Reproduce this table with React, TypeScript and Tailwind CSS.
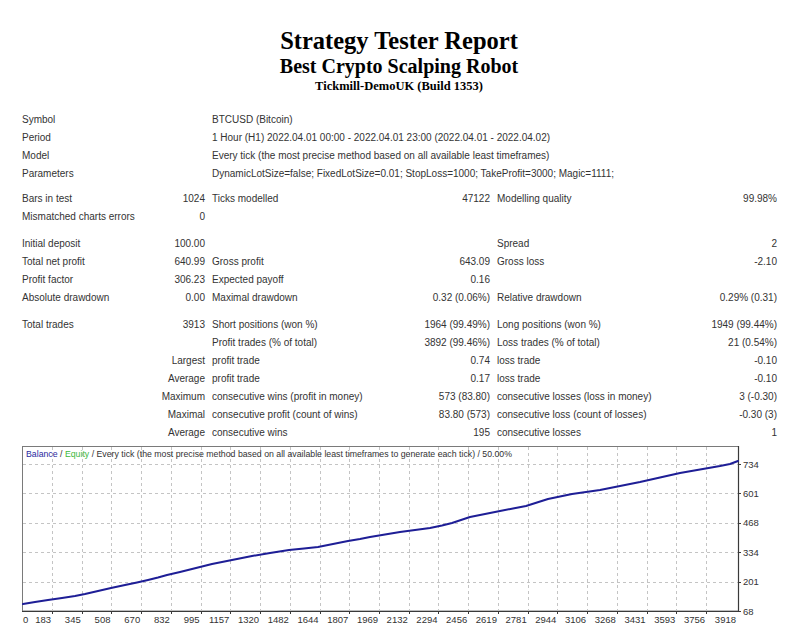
import React from "react";

type CellProps = {
  children?: React.ReactNode;
  span?: 1 | 2 | 4;
  right?: boolean;
  pad?: boolean;
};

function C({ children, span = 1, right = false, pad = false }: CellProps) {
  const spanCls = span === 2 ? "col-span-2" : span === 4 ? "col-span-4" : "col-span-1";
  return (
    <div
      className={`${spanCls} ${right ? "text-right" : "text-left"} ${pad ? "pl-[7px]" : ""} whitespace-nowrap overflow-visible`}
    >
      {children}
    </div>
  );
}

function Row({ children }: { children: React.ReactNode }) {
  return (
    <div className="grid h-[18px] grid-cols-[130px_53px_207px_78px_207px_80px] items-center">
      {children}
    </div>
  );
}

function Six({ a, b, c, d, e, f }: { a: string; b: string; c: string; d: string; e: string; f: string }) {
  return (
    <Row>
      <C>{a}</C>
      <C right>{b}</C>
      <C pad>{c}</C>
      <C right>{d}</C>
      <C pad>{e}</C>
      <C right>{f}</C>
    </Row>
  );
}

function Sub({ a, c, d, e, f }: { a: string; c: string; d: string; e: string; f: string }) {
  return (
    <Row>
      <C span={2} right>
        {a}
      </C>
      <C pad>{c}</C>
      <C right>{d}</C>
      <C pad>{e}</C>
      <C right>{f}</C>
    </Row>
  );
}

const xLabels = [
  "0", "183", "345", "508", "670", "832", "995", "1157", "1320", "1482", "1644", "1807", "1969",
  "2132", "2294", "2456", "2619", "2781", "2944", "3106", "3268", "3431", "3593", "3756", "3918",
];

const yGrid = [
  { y: 464, label: "734" },
  { y: 493.4, label: "601" },
  { y: 522.8, label: "468" },
  { y: 552.2, label: "334" },
  { y: 581.6, label: "201" },
  { y: 611, label: "68" },
];

const curve: [number, number][] = [
  [23, 604], [35, 602], [48, 600], [62, 598], [75, 596], [85, 594], [98, 591], [111, 588],
  [125, 585], [137, 582.5], [148, 580], [158, 577.5], [167, 575], [180, 572], [190, 569.5],
  [200, 567], [212, 564], [222, 562], [237, 559], [252, 556], [270, 553], [289, 550],
  [304, 548.5], [318, 547], [333, 544], [348, 541], [360, 539], [370, 537], [385, 534.5],
  [400, 532], [415, 530], [430, 528], [442, 525.5], [452, 523], [461, 520], [470, 517],
  [485, 514], [500, 511], [513, 508.5], [526, 506], [537, 502.5], [548, 499], [560, 496.5],
  [572, 494], [586, 492], [600, 490], [620, 486], [640, 482], [660, 477.5], [680, 473],
  [700, 469.5], [720, 466], [730, 464], [738, 461],
];

function Chart() {
  const vLines = Array.from({ length: 23 }, (_, i) => 52 + i * 29.73);
  const tickX = [23, ...vLines, 737];
  return (
    <svg
      width={785}
      height={199}
      viewBox="0 444 785 199"
      className="block"
      style={{ fontFamily: '"Liberation Sans", Arial, sans-serif' }}
    >
      <rect x={22.5} y={446.5} width={716} height={164.5} fill="#ffffff" stroke="#7a7a7a" strokeWidth={1} />
      {vLines.map((x, i) => (
        <line
          key={`v${i}`}
          x1={Math.round(x) + 0.5}
          x2={Math.round(x) + 0.5}
          y1={447}
          y2={611}
          stroke="#c4c4c4"
          strokeWidth={1}
          strokeDasharray="3 3"
        />
      ))}
      {yGrid.slice(0, 5).map((g, i) => (
        <line
          key={`h${i}`}
          x1={23}
          x2={738}
          y1={Math.round(g.y) + 0.5}
          y2={Math.round(g.y) + 0.5}
          stroke="#c4c4c4"
          strokeWidth={1}
          strokeDasharray="3 3"
        />
      ))}
      <line x1={738.5} x2={738.5} y1={446} y2={612} stroke="#3a3a3a" strokeWidth={1.2} />
      <line x1={22} x2={739} y1={611.5} y2={611.5} stroke="#3a3a3a" strokeWidth={1.2} />
      {yGrid.map((g, i) => (
        <g key={`yl${i}`}>
          <line x1={738} x2={741} y1={Math.round(g.y) + 0.5} y2={Math.round(g.y) + 0.5} stroke="#3a3a3a" />
          <text x={743} y={g.y + 3.5} fontSize={9.5} fill="#333">
            {g.label}
          </text>
        </g>
      ))}
      {tickX.map((x, i) => (
        <g key={`xl${i}`}>
          {i > 0 && i < tickX.length - 1 && (
            <line x1={Math.round(x) + 0.5} x2={Math.round(x) + 0.5} y1={611} y2={614} stroke="#3a3a3a" />
          )}
          <text
            x={i === 0 ? 23 : x - 1}
            y={623}
            fontSize={9.5}
            fill="#333"
            textAnchor={i === 0 ? "start" : "end"}
          >
            {xLabels[i]}
          </text>
        </g>
      ))}
      <text x={26} y={457} fontSize={8.8} fill="#333" textLength={486} lengthAdjust="spacingAndGlyphs">
        <tspan fill="#2b2ba0">Balance</tspan>
        <tspan> / </tspan>
        <tspan fill="#3cb83c">Equity</tspan>
        <tspan> / Every tick (the most precise method based on all available least timeframes to generate each tick) / 50.00%</tspan>
      </text>
      <polyline
        points={curve.map((p) => p.join(",")).join(" ")}
        fill="none"
        stroke="#1e1e96"
        strokeWidth={2}
        strokeLinejoin="round"
        strokeLinecap="round"
      />
    </svg>
  );
}

export default function App() {
  return (
    <div className="h-[643px] w-[785px] overflow-hidden bg-white">
      <div className="pl-[13px] pt-[27px] text-center text-black" style={{ fontFamily: '"Liberation Serif", "Times New Roman", serif' }}>
        <div className="text-[24.5px] font-bold leading-[28px]">Strategy Tester Report</div>
        <div className="mt-[1px] text-[20px] font-bold leading-[20px]">Best Crypto Scalping Robot</div>
        <div className="mt-[2px] text-[12.5px] font-bold leading-[16px]">Tickmill-DemoUK (Build 1353)</div>
      </div>
      <div
        className="ml-[22px] mt-[16px] text-[10px] text-[#333]"
        style={{ fontFamily: '"Liberation Sans", Arial, sans-serif' }}
      >
        <Row>
          <C span={2}>Symbol</C>
          <C span={4} pad>BTCUSD (Bitcoin)</C>
        </Row>
        <Row>
          <C span={2}>Period</C>
          <C span={4} pad>1 Hour (H1) 2022.04.01 00:00 - 2022.04.01 23:00 (2022.04.01 - 2022.04.02)</C>
        </Row>
        <Row>
          <C span={2}>Model</C>
          <C span={4} pad>Every tick (the most precise method based on all available least timeframes)</C>
        </Row>
        <Row>
          <C span={2}>Parameters</C>
          <C span={4} pad>DynamicLotSize=false; FixedLotSize=0.01; StopLoss=1000; TakeProfit=3000; Magic=1111;</C>
        </Row>
        <div className="h-[7px]" />
        <Six a="Bars in test" b="1024" c="Ticks modelled" d="47122" e="Modelling quality" f="99.98%" />
        <Six a="Mismatched charts errors" b="0" c="" d="" e="" f="" />
        <div className="h-[9px]" />
        <Six a="Initial deposit" b="100.00" c="" d="" e="Spread" f="2" />
        <Six a="Total net profit" b="640.99" c="Gross profit" d="643.09" e="Gross loss" f="-2.10" />
        <Six a="Profit factor" b="306.23" c="Expected payoff" d="0.16" e="" f="" />
        <Six a="Absolute drawdown" b="0.00" c="Maximal drawdown" d="0.32 (0.06%)" e="Relative drawdown" f="0.29% (0.31)" />
        <div className="h-[9px]" />
        <Six a="Total trades" b="3913" c="Short positions (won %)" d="1964 (99.49%)" e="Long positions (won %)" f="1949 (99.44%)" />
        <Sub a="" c="Profit trades (% of total)" d="3892 (99.46%)" e="Loss trades (% of total)" f="21 (0.54%)" />
        <Sub a="Largest" c="profit trade" d="0.74" e="loss trade" f="-0.10" />
        <Sub a="Average" c="profit trade" d="0.17" e="loss trade" f="-0.10" />
        <Sub a="Maximum" c="consecutive wins (profit in money)" d="573 (83.80)" e="consecutive losses (loss in money)" f="3 (-0.30)" />
        <Sub a="Maximal" c="consecutive profit (count of wins)" d="83.80 (573)" e="consecutive loss (count of losses)" f="-0.30 (3)" />
        <Sub a="Average" c="consecutive wins" d="195" e="consecutive losses" f="1" />
      </div>
      <div className="mt-[3px]">
        <Chart />
      </div>
    </div>
  );
}
